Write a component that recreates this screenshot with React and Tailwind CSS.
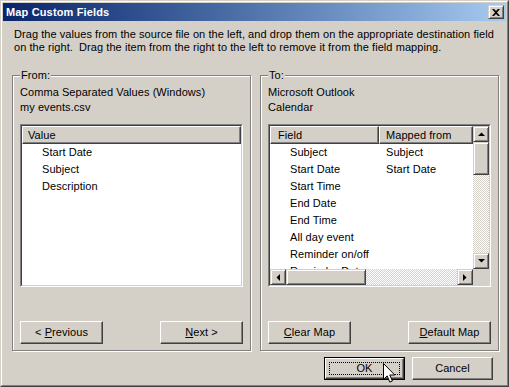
import React from "react";

const face = "bg-[#d4d0c8]";
const raised =
  "border border-t-white border-l-white border-b-[#404040] border-r-[#404040] shadow-[inset_-1px_-1px_0_#808080]";
const raisedSb =
  "border border-t-[#d4d0c8] border-l-[#d4d0c8] border-b-[#404040] border-r-[#404040] shadow-[inset_1px_1px_0_#fff,inset_-1px_-1px_0_#808080]";
const track =
  "bg-[repeating-conic-gradient(#ffffff_0_25%,#d4d0c8_0_50%)] bg-[length:2px_2px]";

const Arrow = ({ dir }) => {
  const pts = {
    up: "0,4 3.5,0.5 7,4",
    down: "0,0 3.5,3.5 7,0",
    left: "4,0 0.5,3.5 4,7",
    right: "0,0 3.5,3.5 0,7",
  }[dir];
  const vertical = dir === "up" || dir === "down";
  return (
    <svg width={vertical ? 7 : 4} height={vertical ? 4 : 7} viewBox={vertical ? "0 0 7 4" : "0 0 4 7"}>
      <polygon points={pts} fill="#000" />
    </svg>
  );
};

const SbButton = ({ dir }) => (
  <div className={`w-[16px] h-[16px] shrink-0 flex items-center justify-center ${face} ${raisedSb}`}>
    <Arrow dir={dir} />
  </div>
);

const Button = ({ children, className = "" }) => (
  <div className={`w-[83px] h-[23px] flex items-center justify-center ${face} ${raised} ${className}`}>
    <span className="whitespace-pre">{children}</span>
  </div>
);

const Sunken = ({ children, className = "" }) => (
  <div className={`border border-t-[#808080] border-l-[#808080] border-b-white border-r-white ${className}`}>
    <div className="h-full border border-t-[#404040] border-l-[#404040] border-b-[#d4d0c8] border-r-[#d4d0c8] bg-white overflow-hidden">
      {children}
    </div>
  </div>
);

const GroupBox = ({ label, lines, children, buttons }) => (
  <div className="relative w-[239px] h-[276px] border border-[#808080] shadow-[inset_1px_1px_0_#fff,1px_1px_0_#fff] px-[7px] pt-[9px] pb-[6px] flex flex-col">
    <span className={`absolute left-[7px] -top-[8px] px-[1px] leading-[15px] ${face}`}>{label}</span>
    {lines.map((l) => (
      <div key={l} className="leading-[15px] h-[15px] whitespace-nowrap">
        {l}
      </div>
    ))}
    <div className="mt-[9px]">{children}</div>
    <div className="mt-[34px] flex justify-between">{buttons}</div>
  </div>
);

const toFields = [
  ["Subject", "Subject"],
  ["Start Date", "Start Date"],
  ["Start Time", ""],
  ["End Date", ""],
  ["End Time", ""],
  ["All day event", ""],
  ["Reminder on/off", ""],
  ["Reminder Date", ""],
];

export default function App() {
  return (
    <div className="relative w-[509px] h-[387px] font-['Liberation_Sans',Arial,sans-serif] text-[11px] tracking-[0.06px] text-black overflow-hidden">
      <div className="w-full h-full border border-t-[#d4d0c8] border-l-[#d4d0c8] border-b-[#404040] border-r-[#404040]">
        <div className={`w-full h-full border border-t-white border-l-white border-b-[#808080] border-r-[#808080] p-[1px] ${face}`}>
          {/* title bar */}
          <div className="h-[18px] flex items-start justify-between bg-gradient-to-r from-[#0a246a] to-[#a6caf0]">
            <span className="pl-[3px] leading-[18px] text-white font-bold text-[11px] tracking-[0.15px]">Map Custom Fields</span>
            <div className={`mt-[2px] mr-[2px] w-[16px] h-[14px] flex items-center justify-center ${face} ${raisedSb}`}>
              <svg width="8" height="7" viewBox="0 0 8 7">
                <path d="M0 0h2l2 2 2-2h2L5 3.5 8 7H6L4 5 2 7H0l3-3.5z" fill="#000" />
              </svg>
            </div>
          </div>

          {/* instructions */}
          <p className="mt-[7px] ml-[11px] leading-[13px] whitespace-nowrap">
            Drag the values from the source file on the left, and drop them on the appropriate destination field
            <br />
            on the right.&nbsp; Drag the item from the right to the left to remove it from the field mapping.
          </p>

          {/* group boxes */}
          <div className="mt-[21px] ml-[9px] flex gap-[9px]">
            <GroupBox
              label="From:"
              lines={["Comma Separated Values (Windows)", "my events.csv"]}
              buttons={
                <>
                  <Button>
                    {"< "}
                    <u>P</u>revious
                  </Button>
                  <Button>
                    <u>N</u>
                    {"ext >"}
                  </Button>
                </>
              }
            >
              <Sunken className="h-[163px]">
                <div className={`h-[18px] flex items-center pl-[5px] ${face} ${raised}`}>Value</div>
                {["Start Date", "Subject", "Description"].map((r) => (
                  <div key={r} className="h-[17px] leading-[17px] pl-[20px]">
                    {r}
                  </div>
                ))}
              </Sunken>
            </GroupBox>

            <GroupBox
              label="To:"
              lines={["Microsoft Outlook", "Calendar"]}
              buttons={
                <>
                  <Button>
                    <u>C</u>lear Map
                  </Button>
                  <Button>
                    <u>D</u>efault Map
                  </Button>
                </>
              }
            >
              <Sunken className="h-[163px]">
                <div className="h-full flex flex-col">
                  <div className="flex flex-1 min-h-0">
                    <div className="flex-1 min-w-0 flex flex-col overflow-hidden">
                      <div className="h-[18px] flex shrink-0">
                        <div className={`w-[109px] flex items-center pl-[7px] ${face} ${raised}`}>Field</div>
                        <div className={`flex-1 flex items-center pl-[6px] ${face} ${raised}`}>Mapped from</div>
                      </div>
                      <div className="flex-1 overflow-hidden">
                        {toFields.map(([f, m]) => (
                          <div key={f} className="h-[17px] leading-[17px] flex whitespace-nowrap">
                            <span className="w-[109px] pl-[20px]">{f}</span>
                            <span className="pl-[7px]">{m}</span>
                          </div>
                        ))}
                      </div>
                    </div>
                    <div className="w-[16px] flex flex-col shrink-0">
                      <SbButton dir="up" />
                      <div className={`h-[33px] shrink-0 ${face} ${raisedSb}`} />
                      <div className={`flex-1 ${track}`} />
                      <SbButton dir="down" />
                    </div>
                  </div>
                  <div className="h-[16px] flex shrink-0">
                    <SbButton dir="left" />
                    <div className={`w-[80px] shrink-0 ${face} ${raisedSb}`} />
                    <div className={`flex-1 ${track}`} />
                    <SbButton dir="right" />
                    <div className={`w-[16px] ${face}`} />
                  </div>
                </div>
              </Sunken>
            </GroupBox>
          </div>

          {/* OK / Cancel */}
          <div className="mt-[6px] mr-[13px] flex justify-end gap-[7px]">
            <div className="w-[81px] h-[23px] border border-black">
              <div className={`w-full h-full p-[3px] ${face} ${raised}`}>
                <div className="w-full h-full border border-dotted border-black flex items-center justify-center">
                  OK
                </div>
              </div>
            </div>
            <div className={`w-[81px] h-[23px] flex items-center justify-center ${face} ${raised}`}>Cancel</div>
          </div>
        </div>
      </div>

      {/* mouse pointer */}
      <svg className="absolute left-[383px] top-[363px]" width="13" height="22" viewBox="0 0 13 22">
        <path
          d="M0.5 0.5v16l3.7-3.6 2.6 6.2 2.6-1.1-2.6-6h5z"
          fill="#fff"
          stroke="#000"
          strokeWidth="1"
          strokeLinejoin="miter"
        />
      </svg>
    </div>
  );
}
